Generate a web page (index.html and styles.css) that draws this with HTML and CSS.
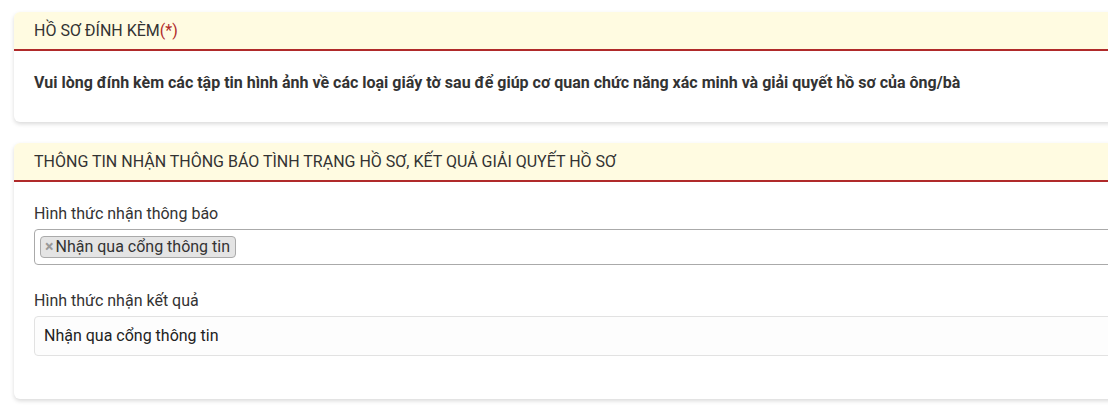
FILE: index.html
```html
<!DOCTYPE html>
<html lang="vi">

<head>
    <meta charset="UTF-8">
    <meta name="viewport" content="width=device-width, initial-scale=1.0">
    <title>Hồ sơ đính kèm</title>
    <link rel="stylesheet" href="styles.css">
</head>

<body>
    <div class="wrapper">
        <div class="card">
            <div class="card-header">HỒ SƠ ĐÍNH KÈM<span class="required">(*)</span></div>
            <div class="card-body note-body">
                <p class="note">Vui lòng đính kèm các tập tin hình ảnh về các loại giấy tờ sau để giúp cơ quan chức năng xác minh và giải quyết hồ sơ của ông/bà</p>
            </div>
        </div>

        <div class="card">
            <div class="card-header">THÔNG TIN NHẬN THÔNG BÁO TÌNH TRẠNG HỒ SƠ, KẾT QUẢ GIẢI QUYẾT HỒ SƠ</div>
            <div class="card-body">
                <div class="form-group">
                    <label>Hình thức nhận thông báo</label>
                    <div class="multi-select">
                        <span class="tag"><span class="tag-remove">&times;</span>Nhận qua cổng thông tin</span>
                    </div>
                </div>
                <div class="form-group">
                    <label>Hình thức nhận kết quả</label>
                    <div class="text-input">Nhận qua cổng thông tin</div>
                </div>
            </div>
        </div>
    </div>
</body>

</html>
```

FILE: styles.css
```css
body {
    font-family: Roboto, "Liberation Sans", Arial, sans-serif;
    background-color: #fff;
    color: #333;
    margin: 0;
    overflow: hidden;
}

.wrapper {
    width: 1130px;
    padding: 12px 0 0 14px;
}

.card {
    background: #fff;
    border-radius: 6px;
    box-shadow: 0 2px 4px rgba(0, 0, 0, 0.15);
    margin-bottom: 21px;
    overflow: hidden;
}

.card-header {
    background: #fffbe1;
    border-bottom: 2px solid #b02a2a;
    padding: 0 20px;
    height: 37px;
    line-height: 38px;
    font-size: 16px;
    color: #333;
}

.required {
    color: #b02a2a;
}

.card-body {
    padding: 22px 20px 43px;
    font-size: 16px;
    line-height: 19px;
}

.note-body {
    padding-bottom: 30px;
}

.note {
    margin: 0;
    font-weight: bold;
    color: #333;
}

.form-group {
    margin-bottom: 26px;
}

.form-group:last-child {
    margin-bottom: 0;
}

.form-group label {
    display: block;
    margin: 0 0 6px;
}

.multi-select {
    border: 1px solid #aaa;
    border-radius: 4px;
    height: 36px;
    padding: 6px 0 0 5px;
    box-sizing: border-box;
}

.tag {
    display: inline-block;
    background: #e4e4e4;
    border: 1px solid #aaa;
    border-radius: 4px;
    padding: 0 5px 0 4px;
    line-height: 20px;
}

.tag-remove {
    color: #999;
    font-weight: bold;
    margin-right: 2px;
}

.text-input {
    border: 1px solid #e2e2e2;
    border-radius: 4px;
    background: #fdfdfd;
    height: 38px;
    line-height: 38px;
    padding: 0 9px;
    color: #222;
}
```
